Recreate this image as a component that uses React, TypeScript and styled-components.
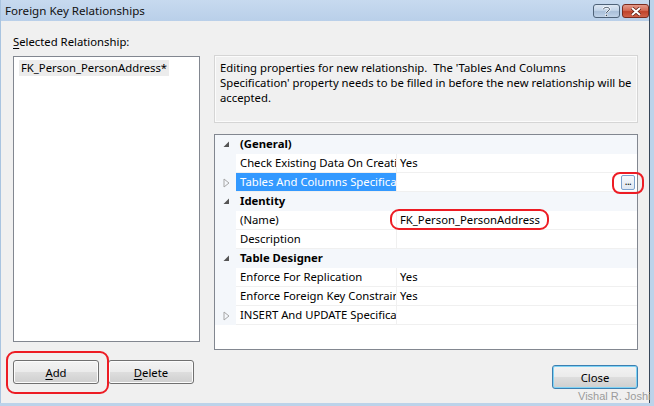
import React from 'react';
import styled, { createGlobalStyle, css } from 'styled-components';

const GlobalStyle = createGlobalStyle`
  html, body {
    margin: 0;
    padding: 0;
    width: 654px;
    height: 406px;
    overflow: hidden;
    background: #bcd3ea;
  }
  body {
    font-family: "Noto Sans", "Open Sans", sans-serif;
    font-size: 11.3px;
    color: #000;
  }
  * { box-sizing: border-box; }
`;

const Window = styled.div`
  position: relative;
  width: 650px;
  height: 403px;
  background: #f0f0f0;
  border-left: 1px solid #a9c4e0;
  border-right: 1px solid #38475a;
  display: flex;
  flex-direction: column;
`;

const TitleBar = styled.div`
  height: 21px;
  display: flex;
  align-items: center;
  padding-left: 4px;
  background: linear-gradient(180deg, #c7daef 0%, #b9cfe9 100%);
`;

const Title = styled.span`
  font-size: 11.6px;
  color: #111;
`;

const CaptionButtons = styled.div`
  margin-left: auto;
  display: flex;
  gap: 2px;
  align-self: flex-start;
  margin-top: 4px;
`;

const CaptionButton = styled.div<{ $danger?: boolean }>`
  width: 27px;
  height: 14px;
  border: 1px solid ${p => (p.$danger ? '#7a2b1e' : '#4e6278')};
  border-radius: 3px;
  display: flex;
  align-items: center;
  justify-content: center;
  background: ${p =>
    p.$danger
      ? 'linear-gradient(180deg, #e49a8a 0%, #d46a55 45%, #c0432b 55%, #d0624a 100%)'
      : 'linear-gradient(180deg, #dce7f3 0%, #c3d4e8 45%, #a9bfd9 55%, #c1d3e8 100%)'};
`;

const Body = styled.div`
  flex: 1;
  display: flex;
  padding: 14px 0 0 12px;
`;

const LeftColumn = styled.div`
  width: 187px;
  display: flex;
  flex-direction: column;
`;

const RightColumn = styled.div`
  width: 424px;
  margin-left: 14px;
  display: flex;
  flex-direction: column;
`;

const Label = styled.div`
  height: 21px;
  line-height: 14px;
`;

const ListBox = styled.div`
  height: 286px;
  background: #fff;
  border: 1px solid #828790;
  padding: 3px 5px;
`;

const ListItem = styled.div`
  display: inline-block;
  background: #ececec;
  padding: 0 2px;
  height: 16px;
  line-height: 15px;
`;

const ButtonRow = styled.div<{ $end?: boolean }>`
  display: flex;
  gap: 9px;
  justify-content: ${p => (p.$end ? 'flex-end' : 'flex-start')};
`;

const Button = styled.div<{ $default?: boolean }>`
  width: 86px;
  height: 24px;
  border-radius: 3px;
  display: flex;
  align-items: center;
  justify-content: center;
  border: 1px solid #707070;
  background: linear-gradient(180deg, #f3f3f3 0%, #ebebeb 48%, #dddddd 52%, #cfcfcf 100%);
  box-shadow: inset 0 0 0 1px #fcfcfc;
  ${p =>
    p.$default &&
    css`
      border-color: #3c7fb1;
      box-shadow: inset 0 0 0 1px #7fd3f5;
    `}
`;

const AccessKey = styled.span`
  text-decoration: underline;
  text-underline-offset: 2px;
`;

const Description = styled.div`
  margin-top: 20px;
  height: 68px;
  border: 1px solid #d5d5d5;
  box-shadow: inset 0 0 0 1px #fbfbfb;
  padding: 4px 5px;
  line-height: 15px;
`;

const Grid = styled.div`
  margin-top: 11px;
  height: 216px;
  background: #fff;
  border: 1px solid #828790;
`;

const Row = styled.div`
  height: 19px;
  display: grid;
  grid-template-columns: 21px 160px 1fr;
  line-height: 18px;
`;

const Gutter = styled.div`
  background: #f4f7fb;
  display: flex;
  align-items: center;
  justify-content: center;
  padding-left: 1px;
`;

const CategoryName = styled.div`
  grid-column: 2 / 4;
  background: #f4f7fb;
  font-weight: 700;
  padding-left: 4px;
`;

const NameCell = styled.div<{ $selected?: boolean }>`
  padding-left: 4px;
  white-space: nowrap;
  overflow: hidden;
  border-bottom: 1px solid #f0f0f0;
  ${p =>
    p.$selected &&
    css`
      background: #3399ff;
      color: #fff;
    `}
`;

const ValueCell = styled.div`
  padding-left: 3px;
  border-left: 1px solid #f0f0f0;
  border-bottom: 1px solid #f0f0f0;
  display: flex;
  align-items: center;
  white-space: nowrap;
  overflow: hidden;
`;

const EllipsisButton = styled.div`
  margin-left: auto;
  margin-right: 2px;
  width: 14px;
  height: 15px;
  border: 1px solid #7da2ce;
  border-radius: 2px;
  background: linear-gradient(180deg, #f5f8fc 0%, #dfe7f1 100%);
  font-size: 10px;
  line-height: 10px;
  text-align: center;
  letter-spacing: -0.5px;
`;

const Annotation = styled.div<{ $x: number; $y: number; $w: number; $h: number; $r: number }>`
  position: absolute;
  left: ${p => p.$x}px;
  top: ${p => p.$y}px;
  width: ${p => p.$w}px;
  height: ${p => p.$h}px;
  border: 2.5px solid #ed1c24;
  border-radius: ${p => p.$r}px;
  pointer-events: none;
`;

const Watermark = styled.div`
  position: absolute;
  left: 577px;
  top: 390px;
  font-family: "Liberation Sans", Arial, sans-serif;
  font-size: 11px;
  color: #9b9b9b;
  white-space: nowrap;
`;

const Expanded = () => (
  <svg width="7" height="7" viewBox="0 0 7 7">
    <polygon points="6,0.5 6,6 0.5,6" fill="#555" />
  </svg>
);

const Collapsed = () => (
  <svg width="7" height="10" viewBox="0 0 7 10">
    <polygon points="1,1 6,5 1,9" fill="none" stroke="#a6a6a6" strokeWidth="1" />
  </svg>
);

type Prop = {
  name: string;
  value?: string;
  expandable?: boolean;
  selected?: boolean;
  ellipsis?: boolean;
};

type Category = { title: string; props: Prop[] };

const categories: Category[] = [
  {
    title: '(General)',
    props: [
      { name: 'Check Existing Data On Creation Or Re-Enabling', value: 'Yes' },
      { name: 'Tables And Columns Specification', expandable: true, selected: true, ellipsis: true },
    ],
  },
  {
    title: 'Identity',
    props: [
      { name: '(Name)', value: 'FK_Person_PersonAddress' },
      { name: 'Description' },
    ],
  },
  {
    title: 'Table Designer',
    props: [
      { name: 'Enforce For Replication', value: 'Yes' },
      { name: 'Enforce Foreign Key Constraint', value: 'Yes' },
      { name: 'INSERT And UPDATE Specification', expandable: true },
    ],
  },
];

const App: React.FC = () => {
  return (
    <>
      <GlobalStyle />
      <Window>
        <TitleBar>
          <Title>Foreign Key Relationships</Title>
          <CaptionButtons>
            <CaptionButton>
              <svg width="9" height="11" viewBox="0 0 9 11">
                <path d="M1.5 3.2 C1.5 1 7.5 0.6 7.5 3.2 C7.5 5 4.5 5 4.5 7" fill="none" stroke="#fff" strokeWidth="2.2" />
                <path d="M1.5 3.2 C1.5 1 7.5 0.6 7.5 3.2 C7.5 5 4.5 5 4.5 7" fill="none" stroke="#34465c" strokeWidth="1" />
                <rect x="3.5" y="8.3" width="2" height="2" fill="#34465c" stroke="#fff" strokeWidth="0.6" />
              </svg>
            </CaptionButton>
            <CaptionButton $danger>
              <svg width="12" height="9" viewBox="0 0 12 9">
                <path d="M2 1 L10 8 M10 1 L2 8" stroke="#5a1a10" strokeWidth="3.4" />
                <path d="M2 1 L10 8 M10 1 L2 8" stroke="#fff" strokeWidth="2" />
              </svg>
            </CaptionButton>
          </CaptionButtons>
        </TitleBar>
        <Body>
          <LeftColumn>
            <Label>
              <AccessKey>S</AccessKey>elected Relationship:
            </Label>
            <ListBox>
              <ListItem>FK_Person_PersonAddress*</ListItem>
            </ListBox>
            <ButtonRow style={{ marginTop: 18 }}>
              <Button>
                <span>
                  <AccessKey>A</AccessKey>dd
                </span>
              </Button>
              <Button>
                <span>
                  <AccessKey>D</AccessKey>elete
                </span>
              </Button>
            </ButtonRow>
          </LeftColumn>
          <RightColumn>
            <Description>
              Editing properties for new relationship.&nbsp; The 'Tables And Columns Specification' property
              needs to be filled in before the new relationship will be accepted.
            </Description>
            <Grid>
              {categories.map(cat => (
                <React.Fragment key={cat.title}>
                  <Row>
                    <Gutter>
                      <Expanded />
                    </Gutter>
                    <CategoryName>{cat.title}</CategoryName>
                  </Row>
                  {cat.props.map(prop => (
                    <Row key={prop.name}>
                      <Gutter>{prop.expandable && <Collapsed />}</Gutter>
                      <NameCell $selected={prop.selected}>{prop.name}</NameCell>
                      <ValueCell>
                        {prop.value}
                        {prop.ellipsis && <EllipsisButton>...</EllipsisButton>}
                      </ValueCell>
                    </Row>
                  ))}
                </React.Fragment>
              ))}
            </Grid>
            <ButtonRow $end style={{ marginTop: 15 }}>
              <Button $default>Close</Button>
            </ButtonRow>
          </RightColumn>
        </Body>
        <Annotation $x={611} $y={172} $w={32} $h={22} $r={8} />
        <Annotation $x={389} $y={209} $w={159} $h={21} $r={9} />
        <Annotation $x={5} $y={351} $w={103} $h={43} $r={9} />
        <Watermark>Vishal R. Joshi</Watermark>
      </Window>
    </>
  );
};

export default App;
